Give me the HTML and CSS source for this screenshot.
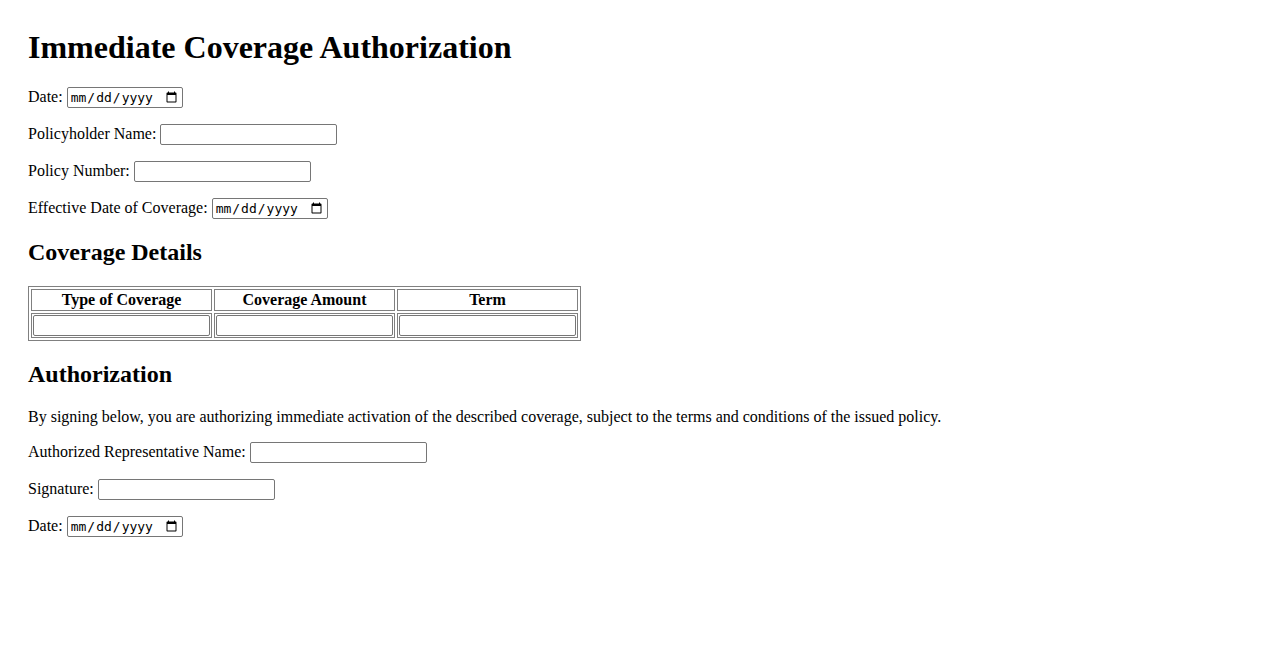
FILE: index.html
```html
<!DOCTYPE html>
<html lang="en">
<head>
<meta charset="utf-8">
<title>Immediate Coverage Authorization</title>
<link rel="stylesheet" href="styles.css">
</head>
<body>
<div class="page">
  <h1 class="title">Immediate Coverage Authorization</h1>
  <p class="row"><label>Date: <input class="date" type="date"></label></p>
  <p class="row"><label>Policyholder Name: <input class="text" type="text"></label></p>
  <p class="row"><label>Policy Number: <input class="text" type="text"></label></p>
  <p class="row"><label>Effective Date of Coverage: <input class="date" type="date"></label></p>

  <h2 class="section">Coverage Details</h2>
  <table class="grid">
    <thead>
      <tr><th>Type of Coverage</th><th>Coverage Amount</th><th>Term</th></tr>
    </thead>
    <tbody>
      <tr>
        <td><input class="text" type="text"></td>
        <td><input class="text" type="text"></td>
        <td><input class="text" type="text"></td>
      </tr>
    </tbody>
  </table>

  <h2 class="section">Authorization</h2>
  <p class="note">By signing below, you are authorizing immediate activation of the described coverage, subject to the terms and conditions of the issued policy.</p>
  <p class="row"><label>Authorized Representative Name: <input class="text" type="text"></label></p>
  <p class="row"><label>Signature: <input class="text" type="text"></label></p>
  <p class="row"><label>Date: <input class="date" type="date"></label></p>
</div>
</body>
</html>
```

FILE: styles.css
```css
html, body {
  background: #ffffff;
}
body {
  margin: 0;
  color: #000000;
  font-family: "Liberation Serif", "Times New Roman", serif;
  font-size: 16px;
}
.page {
  padding: 29px 28px 28px 28px;
}
.title {
  margin: 0 0 21.44px 0;
  font-size: 32px;
  font-weight: bold;
}
.section {
  margin: 19.92px 0;
  font-size: 24px;
  font-weight: bold;
}
.row, .note {
  margin: 16px 0;
}
.text {
  box-sizing: border-box;
  width: 177px;
  height: 21px;
  margin: 0;
  padding: 1px 2px;
  border: 1px solid #767676;
  border-radius: 2px;
  background: #ffffff;
  font-family: "Liberation Sans", Arial, sans-serif;
  font-size: 13.33px;
  vertical-align: baseline;
}
.date {
  box-sizing: border-box;
  width: 116px;
  height: 21px;
  margin: 0;
  padding: 1px 2px;
  border: 1px solid #767676;
  border-radius: 2px;
  background: #ffffff;
  color: #000000;
  font-family: "DejaVu Sans Mono", "Liberation Mono", monospace;
  font-size: 13px;
}
.grid {
  border-collapse: separate;
  border-spacing: 2px;
  border: 1px solid #808080;
}
.grid th, .grid td {
  border: 1px solid #808080;
  padding: 1px;
}
.grid th {
  font-weight: bold;
  text-align: center;
}
.grid td .text {
  display: block;
}
```
